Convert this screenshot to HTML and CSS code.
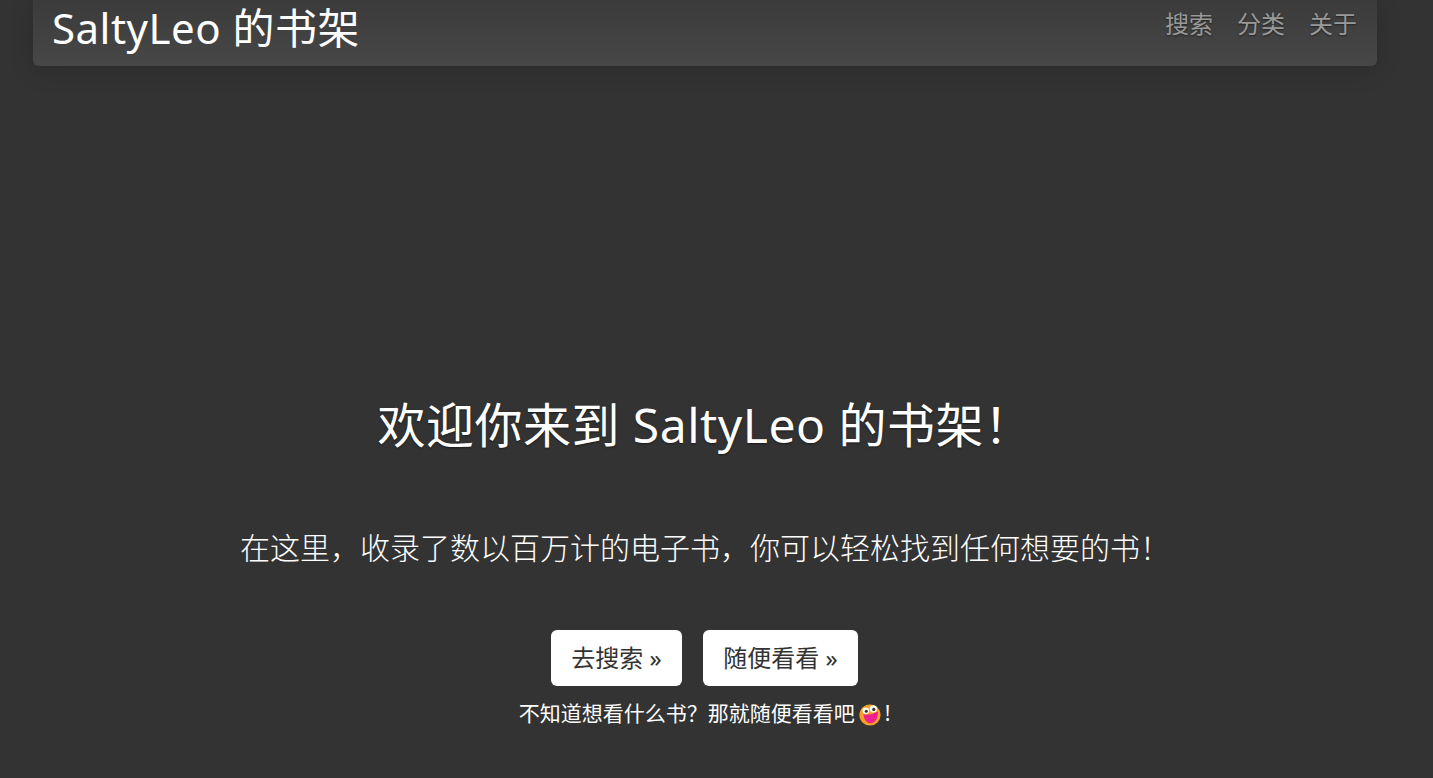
FILE: index.html
```html
<!DOCTYPE html>
<html lang="zh-CN">
<head>
<meta charset="utf-8">
<title>SaltyLeo 的书架</title>
<link rel="stylesheet" href="styles.css">
</head>
<body>
<div class="container">
  <nav class="navbar">
    <a class="brand" href="#">SaltyLeo 的书架</a>
    <ul class="nav-links">
      <li><a href="#">搜索</a></li>
      <li><a href="#">分类</a></li>
      <li><a href="#">关于</a></li>
    </ul>
  </nav>
  <main class="hero">
    <h1>欢迎你来到 SaltyLeo 的书架！</h1>
    <p class="lead">在这里，收录了数以百万计的电子书，你可以轻松找到任何想要的书！</p>
    <div class="actions">
      <a class="btn" href="#">去搜索 »</a>
      <a class="btn" href="#">随便看看 »</a>
    </div>
    <p class="hint">不知道想看什么书？那就随便看看吧<svg class="emoji" viewBox="0 0 22 22" aria-hidden="true"><circle cx="11" cy="11" r="10.6" fill="#f6a025"/><path d="M4.5 10.5 C9 11.5 14 10 18.8 7.5 C19.6 13.5 16.5 19 11.5 19.2 C7.5 19.4 5 15 4.5 10.5Z" fill="#ee1f8e"/><circle cx="6.8" cy="6.8" r="3.3" fill="#fff"/><circle cx="14.3" cy="4.8" r="3.6" fill="#fff"/><circle cx="7.3" cy="7.3" r="1.5" fill="#3a2a20"/><circle cx="14.8" cy="5.4" r="1.6" fill="#3a2a20"/></svg>!</p>
  </main>
</div>
</body>
</html>
```
FILE: styles.css
```css
* { box-sizing: border-box; }
html, body { margin: 0; height: 100%; overflow: hidden; }
body {
  background: #333;
  color: #fff;
  font-family: "Noto Sans", "Noto Sans CJK SC", sans-serif;
}
.container { width: 1344px; margin-left: 33px; }
.navbar {
  height: 66px;
  padding: 0 20px 10px 19px;
  display: flex;
  align-items: center;
  justify-content: space-between;
  background: linear-gradient(to bottom, #3b3b3b, #474747);
  border-radius: 0 0 6px 6px;
  box-shadow: 0 4px 24px rgba(0, 0, 0, .16);
}
.brand { font-size: 42px; letter-spacing: .5px; line-height: 56px; color: #fff; text-decoration: none; white-space: nowrap; }
.nav-links { list-style: none; margin: 0 0 8px; padding: 0; display: flex; gap: 24px; }
.nav-links a { font-size: 24px; line-height: 34px; color: #999; text-decoration: none; text-shadow: 0 1px 2px rgba(0,0,0,.5); }
.hero { padding-top: 324px; text-align: center; }
.hero h1 { margin: 0; font-size: 48px; letter-spacing: .5px; line-height: 70px; font-weight: 400; text-shadow: 0 1px 2px rgba(0,0,0,.5); }
.lead { margin: 66px 0 0; font-size: 30px; line-height: 44px; font-weight: 300; }
.actions { margin-top: 60px; padding-right: 1px; display: flex; justify-content: center; gap: 21px; }
.btn { display: block; height: 56px; padding: 0 20.2px; border-radius: 6px; background: #fff; color: #333; font-size: 24px; line-height: 56px; text-decoration: none; white-space: nowrap; }
.hint { margin: 13px 0 0; padding-right: 1px; font-size: 21px; line-height: 28px; }
.emoji { width: 22px; height: 22px; margin: 0 4px; vertical-align: -5px; }
```
